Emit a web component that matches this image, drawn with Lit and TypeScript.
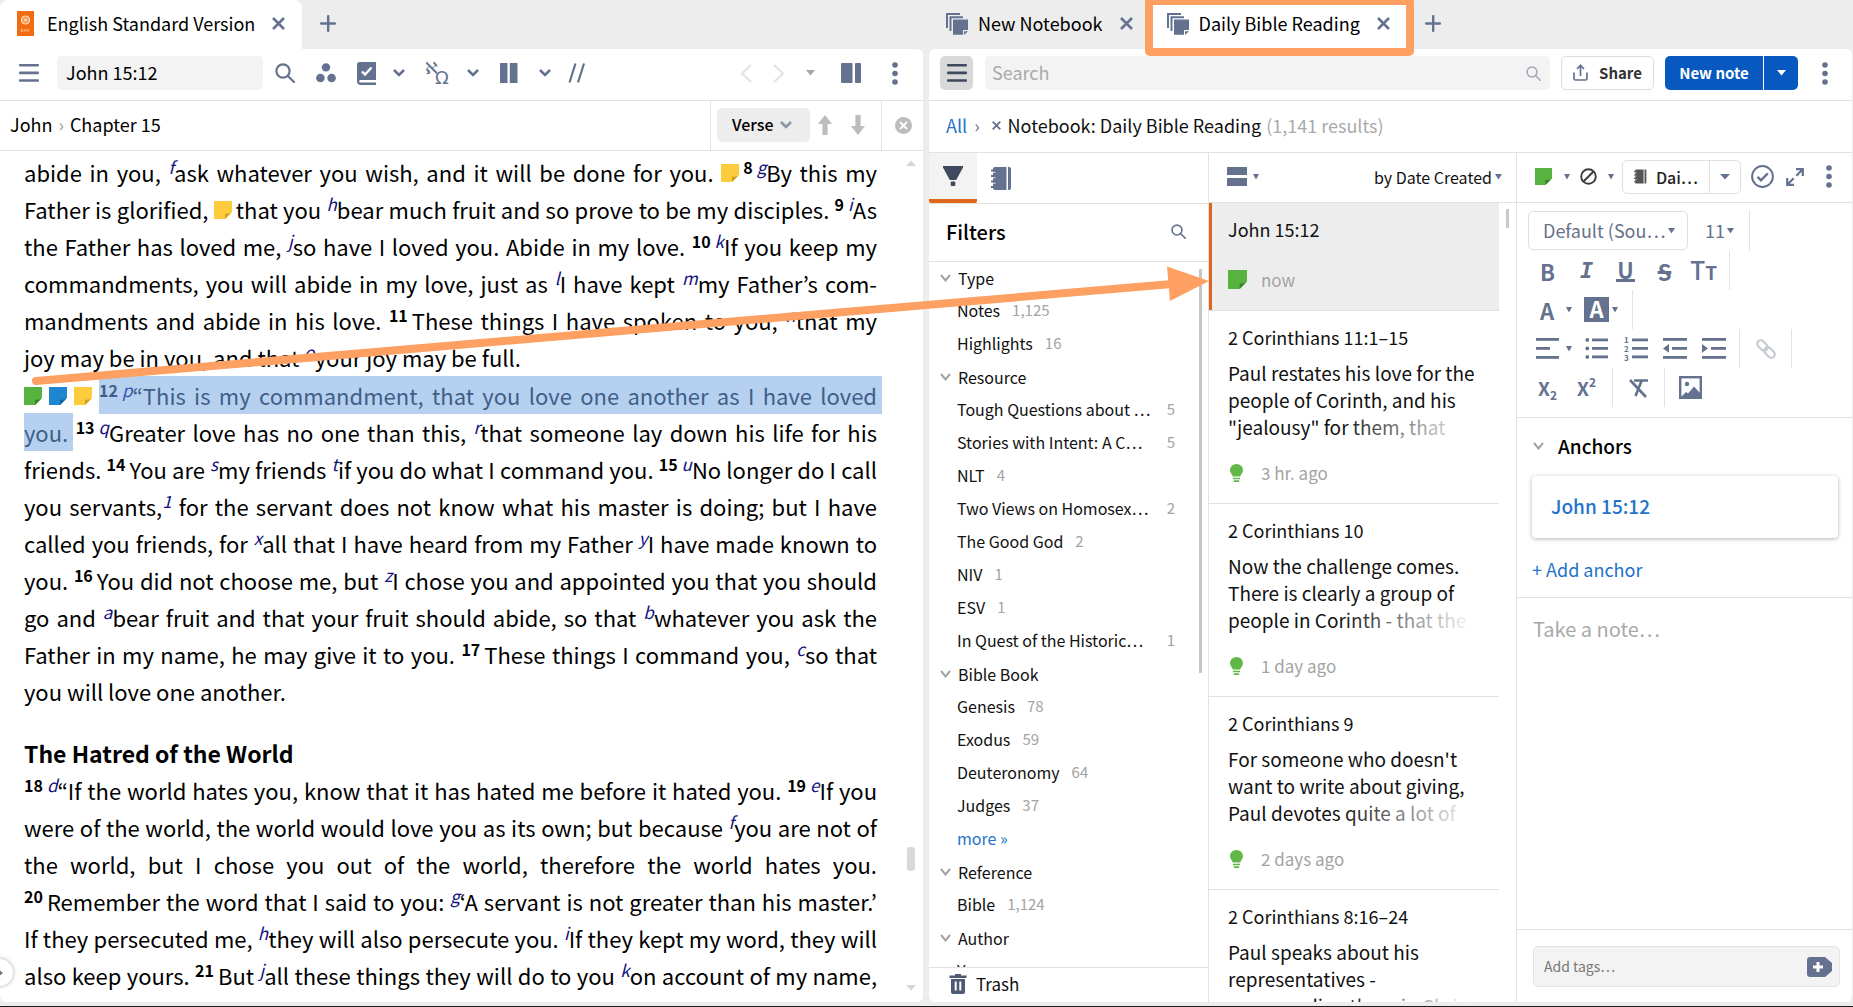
import { LitElement, html, css, svg, nothing } from "lit";
import { customElement, property } from "lit/decorators.js";
import { classMap } from "lit/directives/class-map.js";

/* ---------- icons ---------- */

const shape = (w: number, h: number, body: unknown, cls = "") =>
  html`<svg class=${cls} width=${w} height=${h} viewBox="0 0 ${w} ${h}" fill="currentColor" aria-hidden="true">${body}</svg>`;

const icons = {
  menu: () => shape(20, 18, svg`<rect width="20" height="2.6" y="0" rx="1"/><rect width="20" height="2.6" y="7.6" rx="1"/><rect width="20" height="2.6" y="15.2" rx="1"/>`),
  close: (s = 13) => html`<svg width=${s} height=${s} viewBox="0 0 13 13" fill="none" stroke="currentColor" stroke-width="2.6" aria-hidden="true"><path d="M1 1l11 11M12 1L1 12"/></svg>`,
  plus: () => shape(16, 17, svg`<rect x="7" width="2.4" height="17" rx="1"/><rect y="7.3" width="16" height="2.4" rx="1"/>`),
  search: (s: number, w = 2) => html`<svg width=${s} height=${s} viewBox="0 0 20 20" fill="none" stroke="currentColor" stroke-width=${w} stroke-linecap="round" aria-hidden="true"><circle cx="8" cy="8" r="6.6"/><path d="M13 13l6 6"/></svg>`,
  cluster: () => shape(20, 20, svg`<circle cx="10" cy="4.4" r="4.2"/><circle cx="4.4" cy="15" r="4.3"/><circle cx="15.6" cy="15" r="4.3"/>`),
  guide: () => shape(19, 23, svg`<path d="M2.500 0H19V18H3.500c-1.600 0-1.600 2.600 0 2.600H19V23H3.500C1.500 23 0 21.500 0 19.500V2.500C0 1 1 0 2.500 0z"/><path d="M5 9.500l3 3 6.500-7" fill="none" stroke="#fff" stroke-width="2.400"/>`),
  chevron: () => html`<svg width="12" height="8" viewBox="0 0 12 8" fill="none" stroke="currentColor" stroke-width="2.600" aria-hidden="true"><path d="M1 1l5 5 5-5"/></svg>`,
  thin: () => html`<svg width="11" height="8" viewBox="0 0 11 8" fill="none" stroke="currentColor" stroke-width="2" aria-hidden="true"><path d="M1 1l4.500 5.500L10 1"/></svg>`,
  languages: () => html`<svg width="24" height="24" viewBox="0 0 24 24" fill="currentColor" aria-hidden="true"><text class="glyph" x="-1" y="13" font-size="17">ℵ</text><text class="glyph" x="9" y="23" font-size="18">Ω</text></svg>`,
  columns: () => shape(18, 20, svg`<rect width="7.500" height="20"/><rect x="9.800" width="7.700" height="20"/>`),
  parallel: () => html`<svg width="18" height="20" viewBox="0 0 18 20" fill="none" stroke="currentColor" stroke-width="2.200" aria-hidden="true"><path d="M1.500 19.500L7.500 .5M10 19.500L16 .5"/></svg>`,
  back: () => html`<svg width="12" height="19" viewBox="0 0 12 19" fill="none" stroke="currentColor" stroke-width="2" aria-hidden="true"><path d="M11 1L2 9.500 11 18"/></svg>`,
  forward: () => html`<svg width="12" height="19" viewBox="0 0 12 19" fill="none" stroke="currentColor" stroke-width="2" aria-hidden="true"><path d="M1 1l9 8.500L1 18"/></svg>`,
  caret: (w = 8) => html`<svg width=${w} height="6" viewBox="0 0 8 6" preserveAspectRatio="none" fill="currentColor" aria-hidden="true"><path d="M0 0h8L4 5.500z"/></svg>`,
  panel: () => shape(20, 20, svg`<rect width="11.500" height="20" rx="1"/><rect x="14" width="6" height="20" rx="1"/>`),
  dots: () => shape(6, 23, svg`<circle cx="3" cy="3" r="2.800"/><circle cx="3" cy="11.500" r="2.800"/><circle cx="3" cy="20" r="2.800"/>`),
  up: () => shape(14, 20, svg`<path d="M7 0l7 9H9.600v11H4.400V9H0z"/>`),
  down: () => shape(14, 20, svg`<path d="M7 20l7-9H9.600V0H4.400v11H0z"/>`),
  clear: () => shape(17, 17, svg`<circle cx="8.500" cy="8.500" r="8.500"/><path d="M5 5l7 7M12 5l-7 7" stroke="#fff" stroke-width="1.800"/>`),
  notebooks: () => shape(22, 22, svg`<path d="M0 0h14v2H2v13H0z"/><path d="M3.500 3.200h13.500v2H5.500V18h-2z"/><path d="M7 6.400h15V17h-5v4.800H7z"/><path d="M18 18.200h4l-4 3.800z"/>`),
  share: () => html`<svg width="15" height="17" viewBox="0 0 15 17" fill="none" stroke="currentColor" stroke-width="1.700" aria-hidden="true"><path d="M1 8.500v6c0 .9.500 1.500 1.500 1.500h10c1 0 1.500-.6 1.500-1.500v-6M7.500 12V1.500M4 5l3.500-3.700L11 5"/></svg>`,
  funnel: () => shape(20, 20, svg`<path d="M0 0h20v1.500L13.200 14H6.800L0 1.500z"/><rect x="7.700" y="15.500" width="4.600" height="4.500" rx="1"/>`),
  notebook: (w: number, h: number) => html`<svg width=${w} height=${h} viewBox="0 0 21 23" fill="currentColor" aria-hidden="true"><path d="M4 0h11.500v23H4c-1.200 0-2-.8-2-2V2c0-1.200.8-2 2-2z"/><path d="M17 0h1c1.300 0 2 .8 2 2v19c0 1.200-.7 2-2 2h-1z"/><g stroke="currentColor" stroke-width="1.800"><path d="M0 3.500h4M0 9h4M0 14.500h4M0 20h4"/></g><g stroke="#fff" stroke-width=".8"><path d="M2 5.300h2.500M2 10.800h2.500M2 16.300h2.500"/></g></svg>`,
  stack: () => shape(20, 19, svg`<rect width="20" height="8"/><rect y="11" width="20" height="8"/>`),
  bulb: () => html`<svg width="13" height="18" viewBox="0 0 13 18" fill="#62b846" aria-hidden="true"><path d="M6.500 0C10 0 13 2.800 13 6.300c0 2.600-2.200 4.200-2.800 6.200H2.800C2.200 10.500 0 8.900 0 6.300 0 2.800 3 0 6.500 0z"/><path d="M3 13.700h7v1.600H3zM3.800 16.300h5.400V18H3.800z"/></svg>`,
  trash: () => html`<svg width="18" height="20" viewBox="0 0 18 20" fill="#4d5a73" aria-hidden="true"><path d="M6 0h6v1.500h5.500V4H.5V1.500H6zM2 5h14v13c0 1.200-.8 2-2 2H4c-1.200 0-2-.8-2-2z"/><path d="M6.700 7.500v9M11.300 7.500v9" stroke="#fff" stroke-width="2"/></svg>`,
  none: () => html`<svg width="17" height="17" viewBox="0 0 17 17" fill="none" stroke="#3b3b3b" stroke-width="1.900" aria-hidden="true"><circle cx="8.500" cy="8.500" r="7.300"/><path d="M3.500 13.500l10-10"/></svg>`,
  check: () => html`<svg width="23" height="23" viewBox="0 0 23 23" fill="none" stroke="currentColor" stroke-width="2" aria-hidden="true"><circle cx="11.500" cy="11.500" r="10.400"/><path d="M6.500 11.800l3.500 3.500 6.800-7" stroke-width="2.400"/></svg>`,
  expand: () => html`<svg width="18" height="18" viewBox="0 0 18 18" fill="none" stroke="currentColor" stroke-width="2.200" aria-hidden="true"><path d="M10 1.200h6.800V8M16.500 1.500L10.300 7.700M8 16.800H1.200V10M1.500 16.500l6.200-6.200"/></svg>`,
  align: () => shape(23, 21, svg`<rect width="23" height="2.800"/><rect y="9" width="14" height="2.800"/><rect y="18" width="23" height="2.800"/>`),
  bullets: () => shape(23, 21, svg`<circle cx="2.300" cy="1.900" r="1.900"/><circle cx="2.300" cy="10.400" r="1.900"/><circle cx="2.300" cy="18.900" r="1.900"/><rect x="7" y=".5" width="16" height="2.800"/><rect x="7" y="9" width="16" height="2.800"/><rect x="7" y="17.500" width="16" height="2.800"/>`),
  numbers: () => html`<svg width="24" height="25" viewBox="0 0 24 25" fill="currentColor" aria-hidden="true"><g class="digits"><text x="0" y="7">1</text><text x="0" y="16">2</text><text x="0" y="25">3</text></g><rect x="8" y="2.500" width="16" height="2.800"/><rect x="8" y="11" width="16" height="2.800"/><rect x="8" y="19.500" width="16" height="2.800"/></svg>`,
  outdent: () => shape(24, 21, svg`<rect width="24" height="2.800"/><path d="M0 10.400l6-4.400v8.800z"/><rect x="9" y="9" width="15" height="2.800"/><rect y="18" width="24" height="2.800"/>`),
  indent: () => shape(24, 21, svg`<rect width="24" height="2.800"/><path d="M6 10.400L0 6v8.800z"/><rect x="9" y="9" width="15" height="2.800"/><rect y="18" width="24" height="2.800"/>`),
  link: () => html`<svg width="20" height="20" viewBox="0 0 20 20" fill="none" stroke="#c3c8d1" stroke-width="2" aria-hidden="true"><g transform="rotate(45 10 10)"><rect x="-1" y="6.500" width="12" height="7" rx="3.500"/><rect x="9" y="6.500" width="12" height="7" rx="3.500"/></g></svg>`,
  clearFormat: () => html`<svg width="20" height="20" viewBox="0 0 20 20" fill="none" stroke="currentColor" stroke-width="2.600" aria-hidden="true"><path d="M5 2.500h14M12.500 3L6.500 18"/><path d="M1 2l16 17"/></svg>`,
  image: () => html`<svg width="23" height="23" viewBox="0 0 23 23" fill="currentColor" aria-hidden="true"><rect x="1.200" y="1.200" width="20.600" height="20.600" fill="none" stroke="currentColor" stroke-width="2.400"/><circle cx="8" cy="8" r="2.200"/><path d="M2 21l5-5 2 1.500 6-7 6 6.500v4z"/></svg>`,
  tag: () => shape(25, 20, svg`<path d="M3 0h15l7 6v8l-7 6H3c-1.800 0-3-1.200-3-3V3c0-1.800 1.200-3 3-3z"/><path d="M11 5v10M6 10h10" stroke="#fff" stroke-width="3"/>`),
  book: () => html`<svg width="17" height="25" viewBox="0 0 17 25" aria-hidden="true"><rect width="17" height="25" fill="#f26a12"/><circle cx="8.500" cy="9" r="4" fill="#f79a4f" stroke="#ffe3c4" stroke-width="1.200"/><circle cx="8.500" cy="9" r="1.400" fill="#ffe3c4"/><text class="spine" x="8.500" y="21" text-anchor="middle">ESV</text></svg>`,
};

const swatches: Record<string, [string, string]> = {
  yellow: ["#fccc3c", "#cf9f1f"],
  green: ["#58b23f", "#3b8229"],
  blue: ["#1e86d0", "#1364a3"],
};

const note = (color: string, w = 18, h = 18) => {
  const [base, fold] = swatches[color];
  return html`<svg class="note" width=${w} height=${h} viewBox="0 0 18 18" preserveAspectRatio="none" aria-hidden="true"><path d="M0 0h18v11l-7 7H0z" fill=${base}/><path d="M11 18v-5.500c3 .6 6-.2 7-1.500z" fill=${fold}/></svg>`;
};

/* ---------- shared styles ---------- */

const base = css`
  *, *::before, *::after { box-sizing: border-box; }
  button, input, select, textarea {
    font: inherit; color: inherit; border: 0; background: none; padding: 0; margin: 0; outline: 0; border-radius: 0;
  }
  select { appearance: none; }
  button { display: inline-flex; align-items: center; justify-content: center; flex: none; color: var(--slate); }
  svg { display: block; flex: none; }
  a { color: var(--link); text-decoration: none; }
  ul, p, h2, h3 { margin: 0; padding: 0; list-style: none; }
  .glyph { font-family: "DejaVu Sans", sans-serif; }
`;

/* ---------- tabs ---------- */

@customElement("tab-strip")
export class TabStrip extends LitElement {
  @property({ attribute: false }) tabs: { title: string; icon: "book" | "notebooks"; active?: boolean; marked?: boolean }[] = [];

  static styles = [base, css`
    :host { display: flex; height: 49px; background: #ededed; font-size: 18px; line-height: 24px; }
    .tab { display: flex; align-items: center; position: relative; padding: 0 17px 2px; }
    .tab.active { background: #fff; }
    .tab.active.round { border-radius: 8px 8px 0 0; }
    .title { color: #000; gap: 10px; margin-right: 17px; }
    .round .title { gap: 13px; }
    .title span { padding-bottom: 2px; }
    .title svg, button svg { color: var(--slate); }
    .add { margin: 0 0 2px 18px; }
    .mark { position: absolute; inset: -3px -7px -7px -5px; border: 8px solid #fda061; border-radius: 5px; z-index: 2; }
    .spine { font: 5px "Liberation Serif", serif; fill: #ffe3c4; }
  `];

  render() {
    return html`${this.tabs.map((t) => html`
      <div class=${classMap({ tab: true, active: !!t.active, round: t.icon === "book" })}>
        <button class="title">${icons[t.icon]()}<span>${t.title}</span></button>
        <button aria-label="Close tab">${icons.close()}</button>
        ${t.marked ? html`<div class="mark"></div>` : nothing}
      </div>`)}
      <button class="add" aria-label="New tab">${icons.plus()}</button>`;
  }
}

/* ---------- Bible reader ---------- */

const v = (n: number) => html`<b class="v">${n}</b>`;
const f = (s: string) => html`<a class="f" href="#">${s}</a>`;
const sel = (text: unknown) => html`<span class="sel">${text}</span>`;

/* Each verse paragraph is a list of set lines; the flag marks a paragraph that runs on past the page. */
const paragraph = (lines: unknown[], open = false) =>
  html`<p>${lines.map((l, i) => html`<span class=${classMap({ line: true, last: !open && i === lines.length - 1 })}>${l}</span> `)}</p>`;

const verses7to11 = [
  html`abide in you, ${f("f")}ask whatever you wish, and it will be done for you. ${note("yellow")}${v(8)}${f("g")}By this my`,
  html`Father is glorified, ${note("yellow")}that you ${f("h")}bear much fruit and so prove to be my disciples. ${v(9)}${f("i")}As`,
  html`the Father has loved me, ${f("j")}so have I loved you. Abide in my love. ${v(10)}${f("k")}If you keep my`,
  html`commandments, you will abide in my love, just as ${f("l")}I have kept ${f("m")}my Father’s com-`,
  html`mandments and abide in his love. ${v(11)}These things I have spoken to you, ${f("n")}that my`,
  html`joy may be in you, and that ${f("o")}your joy may be full.`,
];

const verses12to17 = [
  html`<span class="marks">${note("green")}${note("blue")}${note("yellow")}</span>${sel(html`${v(12)}${f("p")}“This is my commandment, that you love one another as I have loved`)}`,
  html`${sel("you.")} ${v(13)}${f("q")}Greater love has no one than this, ${f("r")}that someone lay down his life for his`,
  html`friends. ${v(14)}You are ${f("s")}my friends ${f("t")}if you do what I command you. ${v(15)}${f("u")}No longer do I call`,
  html`you servants,${f("1")} for the servant does not know what his master is doing; but I have`,
  html`called you friends, for ${f("x")}all that I have heard from my Father ${f("y")}I have made known to`,
  html`you. ${v(16)}You did not choose me, but ${f("z")}I chose you and appointed you that you should`,
  html`go and ${f("a")}bear fruit and that your fruit should abide, so that ${f("b")}whatever you ask the`,
  html`Father in my name, he may give it to you. ${v(17)}These things I command you, ${f("c")}so that`,
  html`you will love one another.`,
];

const verses18to21 = [
  html`${v(18)}${f("d")}“If the world hates you, know that it has hated me before it hated you. ${v(19)}${f("e")}If you`,
  html`were of the world, the world would love you as its own; but because ${f("f")}you are not of`,
  html`the world, but I chose you out of the world, therefore the world hates you.`,
  html`${v(20)}Remember the word that I said to you: ${f("g")}‘A servant is not greater than his master.’`,
  html`If they persecuted me, ${f("h")}they will also persecute you. ${f("i")}If they kept my word, they will`,
  html`also keep yours. ${v(21)}But ${f("j")}all these things they will do to you ${f("k")}on account of my name,`,
];

@customElement("bible-reader")
export class BibleReader extends LitElement {
  static styles = [base, css`
    :host { display: flex; flex-direction: column; min-height: 0; background: #fff; border-radius: 0 6px 6px 6px; position: relative; overflow: hidden; }
    .bar { display: flex; align-items: center; height: 52px; border-bottom: 1px solid #e2e2e2; padding: 0 25px 3px 19px; font-size: 18px; }
    .ref { width: 206px; height: 34px; margin-right: 12px; padding: 0 9px 2px; background: #f3f3f3; border-radius: 5px; color: #000; }
    .bar button { margin-right: 21px; }
    .bar .menu { margin-right: 18px; }
    .bar .lead { margin-right: 17px; }
    .bar .last { margin-right: 0; }
    .bar .nav { color: #dfe1e5; }
    .bar .drop { color: #a5a5a5; margin-right: 26px; }
    .bar .wide { margin-right: 31px; }
    .grow { flex: 1; }
    .crumbs { display: flex; height: 50px; border-bottom: 1px solid #e2e2e2; font-size: 18px; }
    .trail { flex: 1; display: flex; align-items: center; gap: 6px; padding: 0 0 3px 10px; }
    .trail a { color: #000; }
    .trail span { color: #999; }
    .step { display: flex; align-items: center; gap: 19px; border-left: 1px solid #e2e2e2; padding: 0 16px 1px 6px; }
    .step button { color: #bcbcbc; }
    .unit { position: relative; display: flex; align-items: center; margin-right: -11px; }
    .unit select { width: 93px; height: 34px; padding: 0 0 2px 15px; border-radius: 5px; background: #ededed; font-size: 16px; font-weight: 500; color: #000; }
    .unit svg { position: absolute; right: 18px; color: #8a95a8; pointer-events: none; }
    .end { display: flex; align-items: center; border-left: 1px solid #e2e2e2; padding: 0 11px 0 13px; }
    .end button { color: #bcbcbc; }
    .body { flex: 1; min-height: 0; display: flex; overflow: hidden; }
    .text { flex: 1; min-width: 0; padding: 3px 29px 0 24px; font-family: "Noto Sans CJK KR", "Noto Sans", sans-serif; font-size: 22px; line-height: 37px; color: #000; }
    .line { display: block; white-space: nowrap; text-align: justify; text-align-last: justify; }
    .line.last { text-align-last: left; }
    .text p + p { margin-top: 1px; }
    .text h2 { margin-top: 25px; font-size: 23px; line-height: 37px; font-weight: 700; }
    .v { font-size: 16px; line-height: 16px; vertical-align: 8px; margin-right: 4px; }
    .f { font-size: 17px; line-height: 16px; vertical-align: 8px; font-style: italic; color: #11117f; }
    .note { display: inline-block; vertical-align: 0; margin-right: 4px; }
    .marks .note { margin-right: 7px; }
    .sel { background: #b6d0ef; color: #3f5f88; padding: 3px 0; box-shadow: 5px 0 0 #b6d0ef; }
    .sel .f { color: #3c50b0; }
    .scroll { width: 17px; display: flex; flex-direction: column; align-items: flex-start; padding: 9px 0 11px; color: #d6d6d6; }
    .thumb { width: 8px; height: 24px; border-radius: 3px; background: #d9d9d9; margin-left: 1px; }
    .above { flex: 684; }
    .below { flex: 114; }
    .flip { transform: scaleY(-1); }
    .handle { position: absolute; left: -14px; bottom: 16px; width: 27px; height: 27px; border-radius: 50%; background: #fff; box-shadow: 0 0 4px rgba(0, 0, 0, .35); color: #777; justify-content: flex-end; padding-right: 9px; }
  `];

  render() {
    return html`
      <div class="bar">
        <button class="menu" aria-label="Menu">${icons.menu()}</button>
        <input class="ref" aria-label="Reference" value="John 15:12">
        <button aria-label="Search">${icons.search(20, 2.2)}</button>
        <button aria-label="Resources">${icons.cluster()}</button>
        <button class="lead" aria-label="Study tools">${icons.guide()}</button>
        <button aria-label="Study tool options">${icons.chevron()}</button>
        <button class="lead" aria-label="Original languages">${icons.languages()}</button>
        <button aria-label="Language options">${icons.chevron()}</button>
        <button aria-label="Columns">${icons.columns()}</button>
        <button class="lead" aria-label="Column options">${icons.chevron()}</button>
        <button aria-label="Parallel resources">${icons.parallel()}</button>
        <span class="grow"></span>
        <button class="nav" aria-label="Back">${icons.back()}</button>
        <button class="nav" aria-label="Forward">${icons.forward()}</button>
        <button class="drop" aria-label="History">${icons.caret(9)}</button>
        <button class="wide" aria-label="Side panel">${icons.panel()}</button>
        <button class="last" aria-label="More">${icons.dots()}</button>
      </div>
      <div class="crumbs">
        <nav class="trail"><a href="#">John</a><span>›</span><a href="#">Chapter 15</a></nav>
        <div class="step">
          <span class="unit"><select aria-label="Step by"><option>Verse</option></select>${icons.chevron()}</span>
          <button aria-label="Previous verse">${icons.up()}</button>
          <button aria-label="Next verse">${icons.down()}</button>
        </div>
        <div class="end"><button aria-label="Close locator">${icons.clear()}</button></div>
      </div>
      <div class="body">
        <article class="text">
          ${paragraph(verses7to11)}
          ${paragraph(verses12to17)}
          <h2>The Hatred of the World</h2>
          ${paragraph(verses18to21, true)}
        </article>
        <div class="scroll">
          <span class="flip">${icons.caret(10)}</span><span class="above"></span><span class="thumb"></span><span class="below"></span>${icons.caret(10)}
        </div>
      </div>
      <button class="handle" aria-label="Show sidebar"><svg width="6" height="8" viewBox="0 0 6 8" fill="currentColor" aria-hidden="true"><path d="M0 0l5 4-5 4z"/></svg></button>`;
  }
}

/* ---------- filter sidebar ---------- */

type Filter = { name: string; count: string; long?: boolean };
const filterGroups: { title: string; items: Filter[]; more?: boolean }[] = [
  { title: "Type", items: [{ name: "Notes", count: "1,125" }, { name: "Highlights", count: "16" }] },
  {
    title: "Resource",
    items: [
      { name: "Tough Questions about …", count: "5", long: true },
      { name: "Stories with Intent: A C…", count: "5", long: true },
      { name: "NLT", count: "4" },
      { name: "Two Views on Homosex…", count: "2", long: true },
      { name: "The Good God", count: "2" },
      { name: "NIV", count: "1" },
      { name: "ESV", count: "1" },
      { name: "In Quest of the Historic…", count: "1", long: true },
    ],
  },
  {
    title: "Bible Book",
    items: [
      { name: "Genesis", count: "78" },
      { name: "Exodus", count: "59" },
      { name: "Deuteronomy", count: "64" },
      { name: "Judges", count: "37" },
    ],
    more: true,
  },
  { title: "Reference", items: [{ name: "Bible", count: "1,124" }] },
  { title: "Author", items: [{ name: "You", count: "" }] },
];

@customElement("filter-sidebar")
export class FilterSidebar extends LitElement {
  static styles = [base, css`
    :host { display: flex; flex-direction: column; min-height: 0; border-right: 1px solid #e2e2e2; font-size: 16px; line-height: 24px; }
    .tabs { display: flex; height: 51px; border-bottom: 1px solid #e2e2e2; }
    .tabs button { width: 48px; }
    .tabs .on { background: #f3f3f3; color: #3f4a5f; border-bottom: 4px solid #e0661c; border-radius: 0 0 2px 2px; height: 50px; }
    .head { display: flex; align-items: center; justify-content: space-between; height: 58px; padding: 0 22px 2px 17px; border-bottom: 1px solid #e2e2e2; }
    .head h2 { font-size: 20px; font-weight: 500; color: #000; }
    .wrap { flex: 1; min-height: 0; display: flex; overflow: hidden; }
    .list { flex: 1; min-width: 0; }
    .row { display: flex; align-items: center; height: 33px; padding: 0 24px 3px 28px; color: #111; }
    .name { white-space: nowrap; }
    .long .name { flex: 1; }
    .count { color: #a3a3a3; font-size: 15px; margin-left: 12px; }
    .group > button { height: 33px; padding: 0 0 2px 11px; gap: 7px; color: #a3a3a3; }
    .group > button span { color: #111; }
    .more { color: var(--link); }
    .thumb { width: 3px; height: 404px; margin: 7px 6px 0 0; background: #c6c6c6; }
    .trash { height: 35px; border-top: 1px solid #e2e2e2; justify-content: flex-start; gap: 9px; padding: 0 0 2px 20px; font-size: 17px; }
    .trash span { color: #111; }
  `];

  render() {
    return html`
      <div class="tabs">
        <button class="on" aria-label="Filters">${icons.funnel()}</button>
        <button aria-label="Notebooks">${icons.notebook(21, 23)}</button>
      </div>
      <div class="head"><h2>Filters</h2><button aria-label="Search filters">${icons.search(15, 2.2)}</button></div>
      <div class="wrap">
        <div class="list">
          ${filterGroups.map((g) => html`
            <section class="group">
              <button>${icons.thin()}<span>${g.title}</span></button>
              <ul>
                ${g.items.map((i) => html`<li><a class=${classMap({ row: true, long: !!i.long })} href="#"><span class="name">${i.name}</span><span class="count">${i.count}</span></a></li>`)}
                ${g.more ? html`<li><a class="row more" href="#">more »</a></li>` : nothing}
              </ul>
            </section>`)}
        </div>
        <div class="thumb"></div>
      </div>
      <button class="trash">${icons.trash()}<span>Trash</span></button>`;
  }
}

/* ---------- note list ---------- */

const notes = [
  { title: "John 15:12", body: "", when: "now", kind: "note" },
  { title: "2 Corinthians 11:1–15", body: "Paul restates his love for the\npeople of Corinth, and his\n\"jealousy\" for them, that", when: "3 hr. ago", kind: "bulb" },
  { title: "2 Corinthians 10", body: "Now the challenge comes.\nThere is clearly a group of\npeople in Corinth - that the", when: "1 day ago", kind: "bulb" },
  { title: "2 Corinthians 9", body: "For someone who doesn't\nwant to write about giving,\nPaul devotes quite a lot of", when: "2 days ago", kind: "bulb" },
  { title: "2 Corinthians 8:16–24", body: "Paul speaks about his\nrepresentatives -\ncommending them in Christ", when: "3 days ago", kind: "bulb" },
];

@customElement("note-list")
export class NoteList extends LitElement {
  static styles = [base, css`
    :host { display: flex; flex-direction: column; min-height: 0; border-right: 1px solid #e2e2e2; }
    .head { display: flex; flex: none; align-items: center; justify-content: space-between; height: 50px; padding: 0 14px 2px 18px; border-bottom: 1px solid #e2e2e2; font-size: 16px; }
    .head button { gap: 6px; }
    .sort { position: relative; display: flex; align-items: center; gap: 3px; color: var(--slate); }
    .sort select { color: #111; height: 24px; }
    .wrap { flex: 1; min-height: 0; display: flex; overflow: hidden; }
    ul { flex: 1; min-width: 0; }
    .item { display: block; padding: 13px 0 17px 19px; border-bottom: 1px solid #e2e2e2; color: #111; line-height: 27px; font-size: 18px; }
    .item.on { background: #ededed; box-shadow: inset 3px 0 0 #e0661c; }
    .body { position: relative; margin-top: 8px; font-size: 19px; height: 81px; overflow: hidden; white-space: pre-line; }
    .body::after { content: ""; position: absolute; right: 0; bottom: 0; width: 160px; height: 27px; background: linear-gradient(90deg, transparent, #fff 85%); }
    .meta { display: flex; align-items: center; margin-top: 23px; color: #a3a3a3; font-size: 17px; }
    .body + .meta { margin-top: 19px; }
    .pic { width: 33px; display: flex; }
    .pic .bulb { margin-left: 2px; }
    .thumb { width: 3px; height: 19px; margin: 6px 7px; background: #c9c9c9; }
  `];

  render() {
    return html`
      <div class="head">
        <button aria-label="View">${icons.stack()}${icons.caret(6)}</button>
        <span class="sort"><select aria-label="Sort notes"><option>by Date Created</option></select>${icons.caret(7)}</span>
      </div>
      <div class="wrap">
        <ul>
          ${notes.map((n) => html`<li><a href="#" class=${classMap({ item: true, on: n.kind === "note" })}>
            <div>${n.title}</div>
            ${n.body ? html`<div class="body">${n.body}</div>` : nothing}
            <div class="meta"><span class="pic">${n.kind === "note" ? note("green", 19, 19) : html`<span class="bulb">${icons.bulb()}</span>`}</span>${n.when}</div>
          </a></li>`)}
        </ul>
        <div class="thumb"></div>
      </div>`;
  }
}

/* ---------- note editor ---------- */

@customElement("note-editor")
export class NoteEditor extends LitElement {
  static styles = [base, css`
    :host { display: flex; flex-direction: column; min-height: 0; font-size: 17px; line-height: 24px; }
    .head { display: flex; align-items: center; height: 50px; padding: 0 20px 2px 18px; border-bottom: 1px solid #e2e2e2; }
    .head button { gap: 11px; }
    .head .color { gap: 12px; margin-right: 10px; }
    .split { display: flex; height: 34px; margin: 0 10px 0 8px; border: 1px solid #e0e0e0; border-radius: 5px; }
    .split .book { width: 87px; font-size: 16px; font-weight: 500; gap: 9px; border-right: 1px solid #e0e0e0; color: #555; }
    .split .book span { color: #222; }
    .split .arrow { width: 30px; }
    .expand { margin-left: 12px; }
    .grow { flex: 1; }
    .tools { padding: 7px 11px 10px; border-bottom: 1px solid #e2e2e2; }
    .line { display: flex; align-items: stretch; height: 39px; }
    .line.first { height: 41px; }
    .line button { width: 39px; font-weight: 700; font-size: 22px; }
    .line .menu { width: 49px; gap: 7px; justify-content: flex-start; padding-left: 8px; }
    .line .menu.text { padding-left: 12px; gap: 12px; }
    .line .menu.fill { padding-left: 7px; gap: 3px; }
    .sep { width: 1px; margin: 0 6px; background: #e2e2e2; }
    .pick { position: relative; display: flex; align-items: center; color: #66718a; }
    .pick select { height: 39px; width: 160px; padding: 0 0 2px 14px; border: 1px solid #e0e0e0; border-radius: 5px; font-size: 18px; }
    .pick svg { position: absolute; right: 13px; pointer-events: none; }
    .pick.size { margin-left: 17px; margin-right: 6px; }
    .pick.size select { border: 0; padding: 0 0 2px; width: 32px; }
    .pick.size svg { right: 3px; }
    .under { border-bottom: 3px solid var(--slate); line-height: 20px; padding: 0 1px; }
    .strike { text-decoration: line-through; text-decoration-thickness: 3px; }
    .serif { font-family: "DejaVu Sans Mono", monospace; font-style: italic; font-size: 22px; }
    .caps { display: flex; align-items: baseline; font-size: 25px; font-weight: 500; }
    .caps .small { font-size: 19px; font-weight: 700; }
    .block { width: 25px; height: 25px; background: var(--slate); color: #fff; line-height: 23px; text-align: center; }
    .sub { font-size: 12px; align-self: flex-end; margin-bottom: 4px; line-height: 16px; }
    .sup { font-size: 12px; align-self: flex-start; margin-top: 6px; line-height: 16px; }
    .x { font-size: 19px; }
    .digits { font-size: 8px; font-weight: 700; }
    .anchors { padding: 14px 14px 14px 15px; border-bottom: 1px solid #e2e2e2; }
    .anchors h3 { display: flex; font-size: 19px; line-height: 27px; }
    .anchors h3 button { gap: 14px; padding-left: 1px; color: #a3a3a3; font-weight: 500; }
    .anchors h3 span { color: #000; }
    .card { display: block; margin: 17px 0 18px; padding: 16px 19px 19px; line-height: 27px; font-size: 19px; font-weight: 500; border-radius: 4px; box-shadow: 0 1px 4px rgba(0, 0, 0, .3); }
    .add { display: flex; font-size: 18px; line-height: 27px; }
    .write { flex: 1; min-height: 0; resize: none; padding: 17px 16px; font-size: 20px; line-height: 27px; }
    ::placeholder { color: #aaa; opacity: 1; }
    .tags { border-top: 1px solid #e2e2e2; padding: 16px 12px 15px 16px; }
    .field { display: flex; align-items: center; height: 41px; padding: 0 7px 0 10px; border: 1px solid #e2e2e2; border-radius: 5px; background: #f3f3f3; }
    .field input { flex: 1; min-width: 0; padding-bottom: 2px; font-size: 14px; }
    .field ::placeholder { color: #777; }
  `];

  render() {
    const sep = html`<span class="sep"></span>`;
    return html`
      <div class="head">
        <button class="color" aria-label="Note style">${note("green", 17, 17)}${icons.caret(6)}</button>
        <button aria-label="Highlight style">${icons.none()}${icons.caret(6)}</button>
        <div class="split"><button class="book">${icons.notebook(13, 15)}<span>Dai…</span></button><button class="arrow" aria-label="Choose notebook">${icons.caret(10)}</button></div>
        <button aria-label="Done">${icons.check()}</button>
        <button class="expand" aria-label="Expand">${icons.expand()}</button>
        <span class="grow"></span>
        <button aria-label="More">${icons.dots()}</button>
      </div>
      <div class="tools">
        <div class="line first">
          <span class="pick"><select aria-label="Font"><option>Default (Sou…</option></select>${icons.caret(7)}</span>
          <span class="pick size"><select aria-label="Font size"><option>11</option></select>${icons.caret(7)}</span>${sep}
        </div>
        <div class="line">
          <button aria-label="Bold">B</button>
          <button class="serif" aria-label="Italic">I</button>
          <button aria-label="Underline"><span class="under">U</span></button>
          <button aria-label="Strikethrough"><span class="strike">S</span></button>
          <button aria-label="Small caps"><span class="caps">T<span class="small">T</span></span></button>${sep}
        </div>
        <div class="line">
          <button class="menu text" aria-label="Text color">A${icons.caret(6)}</button>
          <button class="menu fill" aria-label="Highlight color"><span class="block">A</span>${icons.caret(6)}</button>${sep}
        </div>
        <div class="line">
          <button class="menu" aria-label="Alignment">${icons.align()}${icons.caret(6)}</button>
          <button aria-label="Bulleted list">${icons.bullets()}</button>
          <button aria-label="Numbered list">${icons.numbers()}</button>
          <button aria-label="Decrease indent">${icons.outdent()}</button>
          <button aria-label="Increase indent">${icons.indent()}</button>${sep}
          <button aria-label="Link">${icons.link()}</button>${sep}
        </div>
        <div class="line">
          <button aria-label="Subscript"><span class="x">X</span><span class="sub">2</span></button>
          <button aria-label="Superscript"><span class="x">X</span><span class="sup">2</span></button>${sep}
          <button aria-label="Clear formatting">${icons.clearFormat()}</button>${sep}
          <button aria-label="Insert image">${icons.image()}</button>
        </div>
      </div>
      <div class="anchors">
        <h3><button>${icons.thin()}<span>Anchors</span></button></h3>
        <a class="card" href="#">John 15:12</a>
        <a class="add" href="#">+ Add anchor</a>
      </div>
      <textarea class="write" aria-label="Note" placeholder="Take a note…"></textarea>
      <div class="tags">
        <div class="field"><input aria-label="Tags" placeholder="Add tags…"><button aria-label="Add tag">${icons.tag()}</button></div>
      </div>`;
  }
}

/* ---------- notes panel ---------- */

@customElement("notes-panel")
export class NotesPanel extends LitElement {
  static styles = [base, css`
    :host { display: flex; flex-direction: column; min-height: 0; background: #fff; border-radius: 6px; overflow: hidden; }
    .bar { display: flex; align-items: center; height: 52px; border-bottom: 1px solid #e2e2e2; padding: 0 24px 3px 11px; font-size: 17px; }
    .menu { width: 33px; height: 34px; margin-right: 12px; border-radius: 5px; background: #d9d9d9; color: #3f4a5f; }
    .search { flex: 1; display: flex; align-items: center; height: 34px; padding: 0 9px 0 7px; margin-right: 11px; border-radius: 5px; background: #f3f3f3; }
    .search input { flex: 1; min-width: 0; height: 34px; padding-bottom: 2px; font-size: 18px; }
    .search input::placeholder { color: #aaa; opacity: 1; }
    .search button { color: #a0a7b5; }
    .share { width: 93px; height: 34px; gap: 11px; padding-bottom: 1px; border: 1px solid #dcdcdc; border-radius: 5px; font-size: 15px; font-weight: 700; }
    .share span { color: #333; }
    .new { display: flex; height: 34px; margin: 0 24px 0 11px; gap: 1px; border-radius: 5px; overflow: hidden; }
    .new button { background: #0759c0; color: #fff; font-size: 15px; font-weight: 700; padding-bottom: 1px; }
    .new .main { width: 98px; }
    .new .arrow { width: 34px; }
    .crumbs { display: flex; align-items: center; height: 52px; border-bottom: 1px solid #e2e2e2; padding: 0 0 3px 17px; font-size: 18px; }
    .crumbs .gt { color: var(--slate); margin: 0 12px 0 7px; }
    .crumbs .count { color: #aaa; margin-left: 5px; }
    .crumbs button { margin-right: 7px; }
    .cols { flex: 1; min-height: 0; display: grid; grid-template-columns: 280px 308px minmax(0, 1fr); grid-template-rows: minmax(0, 1fr); }
  `];

  render() {
    return html`
      <div class="bar">
        <button class="menu" aria-label="Menu">${icons.menu()}</button>
        <div class="search"><input type="text" aria-label="Search notes" placeholder="Search"><button aria-label="Search">${icons.search(15, 2)}</button></div>
        <button class="share">${icons.share()}<span>Share</span></button>
        <div class="new"><button class="main">New note</button><button class="arrow" aria-label="New note options">${icons.caret(9)}</button></div>
        <button aria-label="More">${icons.dots()}</button>
      </div>
      <div class="crumbs"><a href="#">All</a><span class="gt">›</span><button aria-label="Remove filter">${icons.close(9)}</button><span>Notebook: Daily Bible Reading</span><span class="count">(1,141 results)</span></div>
      <div class="cols"><filter-sidebar></filter-sidebar><note-list></note-list><note-editor></note-editor></div>`;
  }
}

/* ---------- application ---------- */

@customElement("app-root")
export class AppRoot extends LitElement {
  static styles = [base, css`
    :host {
      --slate: #64728f; --link: #2273c9;
      display: grid; position: relative; height: 100vh; overflow: hidden; box-sizing: border-box;
      grid-template-columns: 1fr 1fr; grid-template-rows: 49px minmax(0, 1fr); column-gap: 6px;
      padding: 0 1px 4px 0; border-bottom: 1px solid #1b1b1b; background: #ededed; color: #111;
      font-family: "Noto Sans CJK SC", "Noto Sans", sans-serif; line-height: 24px;
    }
    .arrow { position: absolute; left: 0; top: 0; pointer-events: none; z-index: 3; }
  `];

  render() {
    return html`
      <tab-strip .tabs=${[{ title: "English Standard Version", icon: "book", active: true }]}></tab-strip>
      <tab-strip .tabs=${[
        { title: "New Notebook", icon: "notebooks" },
        { title: "Daily Bible Reading", icon: "notebooks", active: true, marked: true },
      ]}></tab-strip>
      <bible-reader></bible-reader>
      <notes-panel></notes-panel>
      <svg class="arrow" width="1220" height="400" viewBox="0 0 1220 400" aria-hidden="true">
        <path d="M36 381L1172 284" stroke="#fda061" stroke-width="8" stroke-linecap="round"/>
        <path d="M1167 266.500L1209 281l-39 20z" fill="#fda061"/>
      </svg>`;
  }
}
